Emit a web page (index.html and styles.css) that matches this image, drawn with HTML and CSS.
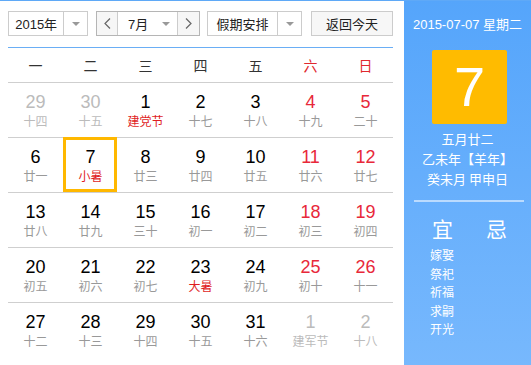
FILE: index.html
```html
<!DOCTYPE html>
<html lang="zh-CN">
<head>
<meta charset="utf-8">
<title>万年历</title>
<link rel="stylesheet" href="styles.css">
</head>
<body>
<div class="widget">
  <div class="main">
    <div class="toolbar">
      <div class="select year">
        <span class="sel-text">2015年</span>
        <span class="sel-arrow"><i class="tri"></i></span>
      </div>
      <div class="select month">
        <span class="nav prev"><svg width="7" height="11" viewBox="0 0 7 11"><polyline points="6,0.5 1,5.5 6,10.5" fill="none" stroke="#666" stroke-width="1.2"/></svg></span>
        <span class="sel-text mtext">7月<i class="tri"></i></span>
        <span class="nav next"><svg width="7" height="11" viewBox="0 0 7 11"><polyline points="1,0.5 6,5.5 1,10.5" fill="none" stroke="#666" stroke-width="1.2"/></svg></span>
      </div>
      <div class="select holiday">
        <span class="sel-text">假期安排</span>
        <span class="sel-arrow"><i class="tri"></i></span>
      </div>
      <div class="btn">返回今天</div>
    </div>
    <div class="cal">
      <div class="week-head">
        <span>一</span><span>二</span><span>三</span><span>四</span><span>五</span><span class="we">六</span><span class="we">日</span>
      </div>
      <div class="row">
        <div class="cell other"><b>29</b><em>十四</em></div>
        <div class="cell other"><b>30</b><em>十五</em></div>
        <div class="cell"><b>1</b><em class="fest">建党节</em></div>
        <div class="cell"><b>2</b><em>十七</em></div>
        <div class="cell"><b>3</b><em>十八</em></div>
        <div class="cell we"><b>4</b><em>十九</em></div>
        <div class="cell we"><b>5</b><em>二十</em></div>
      </div>
      <div class="row">
        <div class="cell"><b>6</b><em>廿一</em></div>
        <div class="cell sel"><b>7</b><em class="fest">小暑</em></div>
        <div class="cell"><b>8</b><em>廿三</em></div>
        <div class="cell"><b>9</b><em>廿四</em></div>
        <div class="cell"><b>10</b><em>廿五</em></div>
        <div class="cell we"><b>11</b><em>廿六</em></div>
        <div class="cell we"><b>12</b><em>廿七</em></div>
      </div>
      <div class="row">
        <div class="cell"><b>13</b><em>廿八</em></div>
        <div class="cell"><b>14</b><em>廿九</em></div>
        <div class="cell"><b>15</b><em>三十</em></div>
        <div class="cell"><b>16</b><em>初一</em></div>
        <div class="cell"><b>17</b><em>初二</em></div>
        <div class="cell we"><b>18</b><em>初三</em></div>
        <div class="cell we"><b>19</b><em>初四</em></div>
      </div>
      <div class="row">
        <div class="cell"><b>20</b><em>初五</em></div>
        <div class="cell"><b>21</b><em>初六</em></div>
        <div class="cell"><b>22</b><em>初七</em></div>
        <div class="cell"><b>23</b><em class="fest">大暑</em></div>
        <div class="cell"><b>24</b><em>初九</em></div>
        <div class="cell we"><b>25</b><em>初十</em></div>
        <div class="cell we"><b>26</b><em>十一</em></div>
      </div>
      <div class="row last">
        <div class="cell"><b>27</b><em>十二</em></div>
        <div class="cell"><b>28</b><em>十三</em></div>
        <div class="cell"><b>29</b><em>十四</em></div>
        <div class="cell"><b>30</b><em>十五</em></div>
        <div class="cell"><b>31</b><em>十六</em></div>
        <div class="cell other"><b>1</b><em>建军节</em></div>
        <div class="cell other"><b>2</b><em>十八</em></div>
      </div>
    </div>
  </div>
  <div class="side">
    <div class="today">2015-07-07 星期二</div>
    <div class="bigday">7</div>
    <div class="lunar">
      <div>五月廿二</div>
      <div>乙未年【羊年】</div>
      <div>癸未月 甲申日</div>
    </div>
    <div class="divider"></div>
    <div class="yiji"><span>宜</span><span>忌</span></div>
    <ul class="yi-list">
      <li>嫁娶</li>
      <li>祭祀</li>
      <li>祈福</li>
      <li>求嗣</li>
      <li>开光</li>
    </ul>
  </div>
</div>
</body>
</html>
```

FILE: styles.css
```css
*, *::before, *::after { box-sizing: border-box; }
html, body { margin: 0; padding: 0; background: #fff; }
body {
  font-family: "Liberation Sans", "Noto Sans CJK SC", sans-serif;
  color: #333;
}
.widget {
  display: flex;
  width: 531px;
  height: 365px;
  overflow: hidden;
  border-top: 1px solid #5fa9f7;
}
.main {
  width: 404px;
  padding: 0 11px 0 8px;
  flex: none;
}
.toolbar {
  height: 46px;
  padding-top: 10px;
  display: flex;
  align-items: flex-start;
}
.select {
  display: flex;
  height: 25px;
  border: 1px solid #ccc;
  background: #fff;
  font-size: 13px;
  color: #222;
}
.sel-text {
  display: flex;
  align-items: center;
  justify-content: center;
  font-family: "Liberation Sans", "Noto Sans CJK SC", sans-serif;
}
.sel-arrow {
  display: flex;
  align-items: center;
  justify-content: center;
  border-left: 1px solid #ccc;
  width: 24px;
}
.tri {
  display: inline-block;
  width: 0;
  height: 0;
  border-left: 4px solid transparent;
  border-right: 4px solid transparent;
  border-top: 4px solid #999;
}
.year { width: 80px; }
.year .sel-text { width: 55px; }
.month {
  width: 104px;
  margin-left: 8px;
  border-color: #b5b5b5;
}
.nav {
  display: flex;
  align-items: center;
  justify-content: center;
  width: 21px;
  background: #f6f6f6;
}
.prev { border-right: 1px solid #ccc; }
.next { border-left: 1px solid #ccc; width: 22px; }
.mtext {
  flex: 1;
  justify-content: flex-start;
  gap: 14px;
  padding-left: 10px;
}
.holiday {
  width: 95px;
  margin-left: 7px;
}
.holiday .sel-text { width: 70px; }
.btn {
  margin-left: 9px;
  width: 82px;
  height: 25px;
  border: 1px solid #ccc;
  background: #f7f7f7;
  font-size: 13px;
  color: #222;
  display: flex;
  align-items: center;
  justify-content: center;
  font-family: "Noto Sans CJK SC", sans-serif;
}
.cal {
  border-top: 1px solid #6aaef5;
}
.week-head {
  display: grid;
  grid-template-columns: repeat(7, 55px);
  height: 35px;
  border-bottom: 1px solid #cfcfcf;
  font-family: "Noto Sans CJK SC", sans-serif;
  font-size: 14px;
  color: #333;
}
.week-head span {
  text-align: center;
  line-height: 34px;
}
.week-head .we { color: #e0282e; }
.row {
  display: grid;
  grid-template-columns: repeat(7, 55px);
  height: 55px;
  border-bottom: 1px solid #cfcfcf;
}
.row.last { border-bottom: none; }
.cell {
  position: relative;
  display: flex;
  flex-direction: column;
  align-items: center;
  padding-top: 8px;
}
.cell b {
  font-weight: normal;
  font-family: "Liberation Sans", sans-serif;
  font-size: 18px;
  line-height: 22px;
  color: #000;
}
.cell em {
  font-style: normal;
  font-family: "Noto Sans CJK SC", sans-serif;
  font-size: 12px;
  line-height: 16px;
  color: #999;
}
.cell.we b { color: #e8283a; }
.cell em.fest { color: #e01e1e; }
.cell.other b { color: #bbb; }
.cell.other em { color: #bbb; }
.cell.sel::after {
  content: "";
  position: absolute;
  left: 0;
  top: -1px;
  width: 54px;
  height: 55px;
  border: 3px solid #ffb800;
}
.side {
  flex: 1;
  background: linear-gradient(#55a5fb, #77b8fd);
  color: #fff;
  display: flex;
  flex-direction: column;
  margin-top: -1px;
}
.today {
  margin-top: 15px;
  text-align: center;
  font-size: 13px;
  line-height: 20px;
  font-family: "Liberation Sans", "Noto Sans CJK SC", sans-serif;
}
.bigday {
  margin: 15px 0 0 28px;
  width: 75px;
  height: 74px;
  background: #ffbb00;
  border-radius: 2px;
  font-family: "Liberation Sans", sans-serif;
  font-size: 56px;
  line-height: 74px;
  text-align: center;
}
.lunar {
  margin-top: 5px;
  text-align: center;
  font-family: "Noto Sans CJK SC", sans-serif;
  font-size: 13px;
  line-height: 20px;
}
.divider {
  margin: 11px 7px 0 10px;
  height: 2px;
  background: rgba(255, 255, 255, 0.55);
}
.yiji {
  margin-top: 13px;
  padding-left: 28px;
  display: flex;
  gap: 33px;
  font-family: "Noto Sans CJK SC", sans-serif;
  font-size: 21px;
  line-height: 26px;
}
.yi-list {
  list-style: none;
  margin: 5px 0 0;
  padding: 0 0 0 26px;
  font-family: "Noto Sans CJK SC", sans-serif;
  font-size: 12px;
  line-height: 18.5px;
}
```
